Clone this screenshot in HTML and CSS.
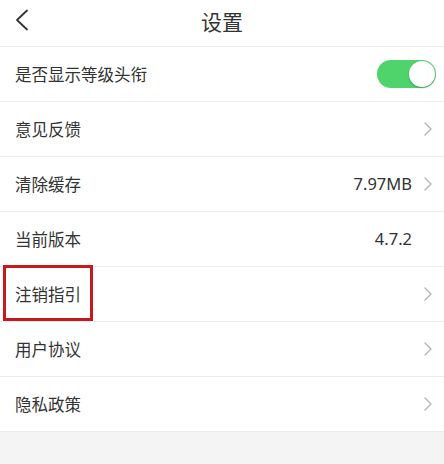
FILE: index.html
```html
<!DOCTYPE html>
<html lang="zh">
<head>
<meta charset="utf-8">
<link rel="stylesheet" href="styles.css">
</head>
<body>
<div class="page">
  <header class="header">
    <svg class="back" width="14" height="22" viewBox="0 0 14 22"><path d="M12 1.5 L2 11 L12 20.5" fill="none" stroke="#333" stroke-width="1.8" stroke-linecap="round" stroke-linejoin="round"/></svg>
    <h1 class="title">设置</h1>
  </header>
  <ul class="list">
    <li class="row">
      <span class="label">是否显示等级头衔</span>
      <span class="toggle"><span class="knob"></span></span>
    </li>
    <li class="row">
      <span class="label">意见反馈</span>
      <span class="slot"><svg class="chev" width="8" height="14" viewBox="0 0 8 14"><path d="M1 1 L7 7 L1 13" fill="none" stroke="#b5b5b5" stroke-width="1.4" stroke-linecap="round" stroke-linejoin="round"/></svg></span>
    </li>
    <li class="row">
      <span class="label">清除缓存</span>
      <span class="value">7.97MB</span>
      <span class="slot"><svg class="chev" width="8" height="14" viewBox="0 0 8 14"><path d="M1 1 L7 7 L1 13" fill="none" stroke="#b5b5b5" stroke-width="1.4" stroke-linecap="round" stroke-linejoin="round"/></svg></span>
    </li>
    <li class="row">
      <span class="label">当前版本</span>
      <span class="value">4.7.2</span>
      <span class="slot"></span>
    </li>
    <li class="row row-marked">
      <span class="label">注销指引</span>
      <span class="slot"><svg class="chev" width="8" height="14" viewBox="0 0 8 14"><path d="M1 1 L7 7 L1 13" fill="none" stroke="#b5b5b5" stroke-width="1.4" stroke-linecap="round" stroke-linejoin="round"/></svg></span>
      <span class="mark"></span>
    </li>
    <li class="row">
      <span class="label">用户协议</span>
      <span class="slot"><svg class="chev" width="8" height="14" viewBox="0 0 8 14"><path d="M1 1 L7 7 L1 13" fill="none" stroke="#b5b5b5" stroke-width="1.4" stroke-linecap="round" stroke-linejoin="round"/></svg></span>
    </li>
    <li class="row">
      <span class="label">隐私政策</span>
      <span class="slot"><svg class="chev" width="8" height="14" viewBox="0 0 8 14"><path d="M1 1 L7 7 L1 13" fill="none" stroke="#b5b5b5" stroke-width="1.4" stroke-linecap="round" stroke-linejoin="round"/></svg></span>
    </li>
  </ul>
  <div class="rest"></div>
</div>
</body>
</html>
```
FILE: styles.css
```css
html, body {
  margin: 0;
  padding: 0;
  background: #f4f4f4;
}
body {
  font-family: "Noto Sans CJK SC", "Noto Sans", sans-serif;
  color: #333;
  width: 444px;
  height: 464px;
  overflow: hidden;
}
.page {
  display: flex;
  flex-direction: column;
  height: 464px;
}
.header {
  position: relative;
  height: 46px;
  background: #fff;
  border-bottom: 1px solid #ececec;
  display: flex;
  align-items: center;
  justify-content: center;
}
.back {
  position: absolute;
  left: 15px;
  top: 9px;
}
.title {
  margin: 0;
  font-size: 21px;
  font-weight: 400;
  color: #333;
  line-height: 1;
  margin-top: -4px;
}
.list {
  list-style: none;
  margin: 0;
  padding: 0;
  background: #fff;
}
.row {
  position: relative;
  height: 54px;
  border-bottom: 1px solid #ececec;
  display: flex;
  align-items: center;
  padding: 0 12px 0 15px;
}
.label {
  flex: 1;
  font-size: 16.5px;
  line-height: 1;
  color: #333;
}
.value {
  font-size: 16.5px;
  line-height: 1;
  color: #333;
  font-family: "Noto Sans", "Noto Sans CJK SC", sans-serif;
}
.slot {
  width: 20px;
  display: flex;
  justify-content: flex-end;
  align-items: center;
}
.chev {
  display: block;
}
.toggle {
  position: relative;
  width: 59px;
  height: 28px;
  border-radius: 14px;
  background: #4fd46b;
  margin-right: -4px;
}
.knob {
  position: absolute;
  right: 1px;
  top: 1px;
  width: 26px;
  height: 26px;
  border-radius: 50%;
  background: #fff;
  box-shadow: 0 1px 2px rgba(0,0,0,0.25);
}
.mark {
  position: absolute;
  left: 3px;
  top: -2px;
  width: 84px;
  height: 50px;
  border: 3px solid #c8191e;
}
.rest {
  flex: 1;
  background: #f4f4f4;
}
```
